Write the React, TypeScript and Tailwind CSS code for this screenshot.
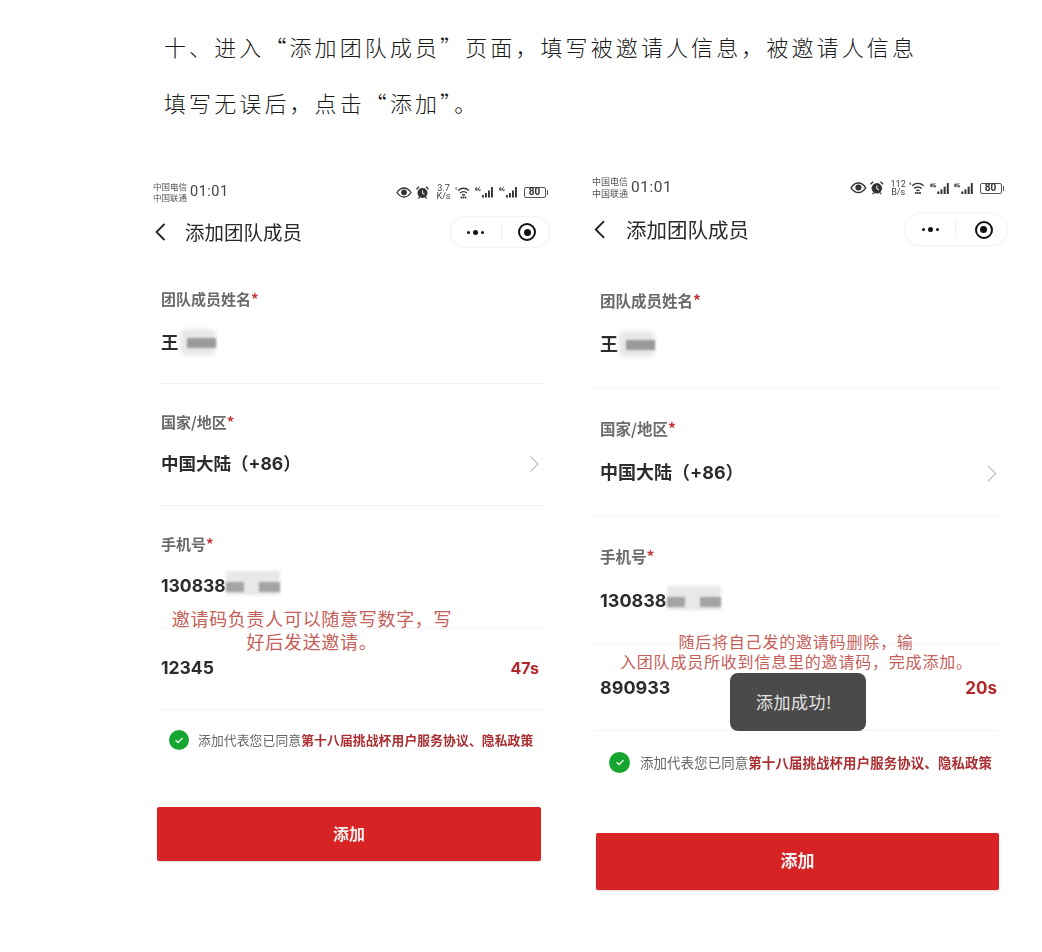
import React from "react";

type Cfg = {
  root: string; carrier: string; time: string; statusPad: string; statusGap: string; title: string; titleGap: string; back: number;
  nav: string; capsule: string; dotsBox: string; line: string; targetBox: string; label: string; value: string; star: string;
  rowPx: string; rowLine: string; f1: string; f2: string; f3: string; f4: string; v1: string; v2: string; v3: string; v4: string;
  arrow: number; arrowCls: string; suffix: string; agree: string; agreeIcon: number; agreeText: string; btn: string; btnText: string; scale: number;
  speedTop: string; speedBottom: string;
};

const left: Cfg = {
  root: "w-[397px]", carrier: "w-[37px] text-[8.500px] leading-[11px]", time: "text-[14.5px]", statusPad: "pr-[2px]", statusGap: "gap-[4px]",
  title: "text-[19.500px]", titleGap: "ml-[12px]", back: 22,
  nav: "mt-[13px] h-[32px]", capsule: "w-[100px] h-[32px]", dotsBox: "w-[51px]", line: "h-[16px]", targetBox: "w-[48px] pl-[4px]",
  label: "text-[15px]", value: "text-[17.500px]", star: "text-[#c33a3e]",
  rowPx: "ml-[7px] mr-[6px] pl-[1px]", rowLine: "border-[#f4f4f4]",
  f1: "mt-[14px] h-[122px] pt-[27px]", f2: "h-[122px] pt-[28px]", f3: "h-[123px] pt-[28px]", f4: "h-[81px] pt-[27px]",
  v1: "mt-[22px]", v2: "mt-[20px]", v3: "mt-[20px]", v4: "",
  arrow: 18, arrowCls: "mr-[1px]", suffix: "text-[16px] mr-[5px]", agree: "mt-[17px] ml-[16px] h-[26px] gap-[9px]", agreeIcon: 20, agreeText: "text-[12.750px] tracking-[0.15px]",
  btn: "mt-[54px] ml-[4px] w-[384px] h-[54px] pb-[3px]", btnText: "text-[16px]", scale: 1,
  speedTop: "3.7", speedBottom: "K/s",
};

const right: Cfg = {
  root: "w-[416px] -mt-[4px]", carrier: "w-[39px] text-[9px] leading-[12px]", time: "text-[15.5px]", statusPad: "pr-[4px]", statusGap: "gap-[3.500px]",
  title: "text-[20.500px]", titleGap: "ml-[13px]", back: 23,
  nav: "mt-[14px] h-[33px]", capsule: "w-[104px] h-[33px]", dotsBox: "w-[52px]", line: "h-[17px]", targetBox: "w-[52px] pl-[4px]",
  label: "text-[15.500px]", value: "text-[18px]", star: "text-[#c33a3e]",
  rowPx: "ml-[3px] mr-[11px] pl-[5px]", rowLine: "border-[#f4f4f4]",
  f1: "mt-[17px] h-[126px] pt-[27px]", f2: "h-[128px] pt-[29px]", f3: "h-[128px] pt-[29px]", f4: "h-[86px] pt-[31px]",
  v1: "mt-[23px]", v2: "mt-[23px]", v3: "mt-[23px]", v4: "",
  arrow: 19, arrowCls: "-mr-[4px]", suffix: "text-[17px] mr-[0px]", agree: "mt-[18px] ml-[17px] h-[26px] gap-[10px]", agreeIcon: 21, agreeText: "text-[13.400px] tracking-[0.15px]",
  btn: "mt-[58px] ml-[4px] w-[403px] h-[57px] pb-[3px]", btnText: "text-[17px]", scale: 1.05,
  speedTop: "112", speedBottom: "B/s",
};

function Eye({ s }: { s: number }) {
  return (
    <svg width={16 * s} height={11 * s} viewBox="0 0 16 11" className="shrink-0">
      <path d="M1 5.5C3 2.5 5.3 1 8 1s5 1.500 7 4.500C13 8.500 10.700 10 8 10S3 8.500 1 5.500Z" fill="none" stroke="#333" strokeWidth="1.3" />
      <circle cx="8" cy="5.300" r="2.900" fill="#333" />
    </svg>
  );
}

function Alarm({ s }: { s: number }) {
  return (
    <svg width={13 * s} height={13 * s} viewBox="0 0 13 13" className="shrink-0">
      <circle cx="6.500" cy="7" r="5" fill="#333" />
      <path d="M6.500 4.200V7l2 1.500" stroke="#ddd" strokeWidth="1.100" fill="none" />
      <path d="M0.500 3.200 3 0.800M12.500 3.200 10 0.800M2.500 12.500l1-1.300M10.500 12.500l-1-1.300" stroke="#333" strokeWidth="1.300" />
    </svg>
  );
}

function Wifi({ s }: { s: number }) {
  return (
    <svg width={16 * s} height={13 * s} viewBox="0 0 16 13" className="shrink-0">
      <path d="M3 4.500C6.300 1.800 10.700 1.800 14 4.500M5 7C7.200 5.300 9.800 5.300 12 7M7 9.300c1-.7 2-.7 3 0" stroke="#333" strokeWidth="1.400" fill="none" />
      <circle cx="6.500" cy="11.500" r="1" fill="#333" />
      <circle cx="8.500" cy="11.500" r="1" fill="#333" />
      <circle cx="10.500" cy="11.500" r="1" fill="#333" />
      <path d="M1.500 1.200C.8 2 .8 3 1.500 3.800" stroke="#444" strokeWidth="1" fill="none" />
    </svg>
  );
}

function Signal({ s }: { s: number }) {
  return (
    <svg width={20 * s} height={12 * s} viewBox="0 0 20 12" className="shrink-0">
      <path d="M1 1.500 0.500 4H2M2 1.500V5M5 1.500C3.800 1.500 3.500 2.300 3.500 3.200S4 4.800 5 4.800V3.200" stroke="#444" strokeWidth="1" fill="none" />
      <rect x="7" y="9" width="1.900" height="2.500" fill="#333" />
      <rect x="10" y="7" width="1.900" height="4.500" fill="#333" />
      <rect x="13" y="4.500" width="1.900" height="7" fill="#333" />
      <rect x="16" y="1" width="1.900" height="10.500" fill="#333" />
    </svg>
  );
}

function Capsule({ c }: { c: Cfg }) {
  return (
    <div className={`flex items-center rounded-full bg-white border border-[#f5f5f5] shadow-[0_0_3px_rgba(0,0,0,0.05)] ${c.capsule}`}>
      <div className={`flex items-center justify-center gap-[3px] ${c.dotsBox}`}>
        <span className="size-[3px] rounded-full bg-[#111]" />
        <span className="size-[5px] rounded-full bg-[#111]" />
        <span className="size-[3px] rounded-full bg-[#111]" />
      </div>
      <div className={`w-px bg-[#eeeeee] ${c.line}`} />
      <div className={`flex items-center justify-center ${c.targetBox}`}>
        <span className="flex items-center justify-center size-[18px] rounded-full border-2 border-[#111]">
          <span className="size-[7px] rounded-full bg-[#111]" />
        </span>
      </div>
    </div>
  );
}

function Mask({ variant }: { variant: "name" | "phone" | "phone2" }) {
  if (variant === "name") {
    return (
      <span className="relative inline-block w-[52px] h-[24px] ml-[1px]">
        <span className="absolute left-0 -top-[2px] w-[36px] h-[26px] rounded-md bg-[#e8e8e8] blur-[2px]" />
        <span className="absolute left-[7px] top-[7px] w-[29px] h-[10px] bg-[#9a9a9a] blur-[1px]" />
      </span>
    );
  }
  return (
    <span className="relative inline-block w-[62px] h-[24px]">
      <span className="absolute left-0 -top-[3px] w-[54px] h-[24px] bg-[#e8e8e8] blur-[1.500px]" />
      <span className="absolute left-0 top-[8px] w-[18px] h-[10px] bg-[#a3a3a3] blur-[1px]" />
      <span className="absolute left-[33px] top-[8px] w-[21px] h-[10px] bg-[#a3a3a3] blur-[1px]" />
    </span>
  );
}

function Label({ c, text }: { c: Cfg; text: string }) {
  return (
    <div className={`h-[20px] leading-[20px] font-semibold text-[#6b6b6b] ${c.label}`}>
      {text}<span className={c.star}>*</span>
    </div>
  );
}

function Phone({ c, name, code, suffix, mask }: { c: Cfg; name: React.ReactNode; code: string; suffix: string; mask: "phone" | "phone2" }) {
  const row = `border-b ${c.rowPx} ${c.rowLine}`;
  const val = `h-[24px] leading-[24px] font-bold text-[#2c2c2c] flex items-center font-['Inter','Noto_Sans_CJK_SC',sans-serif] ${c.value}`;
  return (
    <div className={`relative shrink-0 ${c.root}`}>
      <div className="blur-[0.4px]">
        <div className={`flex items-center justify-between h-[22px] ${c.statusPad}`}>
          <div className="flex items-center">
            <div className={`text-[#555] ${c.carrier}`}>
              <div>中国电信</div>
              <div>中国联通</div>
            </div>
            <span className={`font-['Roboto',sans-serif] text-[#444] tracking-[0.5px] ${c.time}`}>01:01</span>
          </div>
          <div className={`flex items-center ${c.statusGap}`}>
            <Eye s={c.scale} />
            <Alarm s={c.scale} />
            <div className="ml-[3px] text-center text-[9px] leading-[8px] text-[#444] font-['Roboto',sans-serif]">
              <div>{c.speedTop}</div>
              <div>{c.speedBottom}</div>
            </div>
            <Wifi s={c.scale} />
            <Signal s={c.scale} />
            <Signal s={c.scale} />
            <div className="flex items-center ml-[1px]">
              <span className="flex items-center justify-center w-[22px] h-[11px] rounded-[2px] border border-[#555] text-[10px] leading-none font-bold text-[#333] font-['Roboto',sans-serif]">80</span>
              <span className="w-[1.500px] h-[5px] bg-[#555] ml-[1px]" />
            </div>
          </div>
        </div>

        <div className={`flex items-center justify-between ${c.nav}`}>
          <div className="flex items-center">
            <svg width={c.back} height={c.back} viewBox="0 0 22 22" className="-ml-[2px] shrink-0">
              <path d="M13.500 3 5.500 11l8 8" fill="none" stroke="#222" strokeWidth="1.800" />
            </svg>
            <span className={`text-[#2a2a2a] ${c.title} ${c.titleGap}`}>添加团队成员</span>
          </div>
          <Capsule c={c} />
        </div>

        <div className={`${row} ${c.f1}`}>
          <Label c={c} text="团队成员姓名" />
          <div className={`${val} ${c.v1}`}>{name}</div>
        </div>
        <div className={`${row} ${c.f2}`}>
          <Label c={c} text="国家/地区" />
          <div className={`${val} justify-between ${c.v2}`}>
            <span>中国大陆（+86）</span>
            <svg width={c.arrow} height={c.arrow} viewBox="0 0 18 18" className={`shrink-0 ${c.arrowCls}`}>
              <path d="M5.500 1.500 13 9l-7.500 7.500" fill="none" stroke="#bdbdbd" strokeWidth="1.100" />
            </svg>
          </div>
        </div>
        <div className={`${row} ${c.f3}`}>
          <Label c={c} text="手机号" />
          <div className={`${val} ${c.v3}`}>130838<Mask variant={mask} /></div>
        </div>
        <div className={`${row} ${c.f4}`}>
          <div className={`${val} justify-between ${c.v4}`}>
            <span>{code}</span>
            <span className={`font-bold text-[#b3282c] ${c.suffix}`}>{suffix}</span>
          </div>
        </div>

        <div className={`flex items-center ${c.agree}`}>
          <span className="flex items-center justify-center rounded-full bg-[#16a52f] shrink-0" style={{ width: c.agreeIcon, height: c.agreeIcon }}>
            <svg width="12" height="12" viewBox="0 0 12 12">
              <path d="M2.500 6.200 5 8.500l4.500-4.500" fill="none" stroke="#e8f7ea" strokeWidth="1.300" />
            </svg>
          </span>
          <span className={`whitespace-nowrap text-[#666] ${c.agreeText}`}>
            添加代表您已同意<span className="font-bold text-[#a92f33]">第十八届挑战杯用户服务协议、隐私政策</span>
          </span>
        </div>

        <button className={`flex items-center justify-center rounded-[2px] bg-[#d72323] font-bold text-[#f6f0f0] shadow-[0_1px_2px_rgba(0,0,0,0.15)] ${c.btn} ${c.btnText}`}>添加</button>
      </div>
    </div>
  );
}

export default function App() {
  return (
    <div className="relative w-[1042px] h-[952px] overflow-hidden bg-white font-['Noto_Sans_CJK_SC','Noto_Sans',sans-serif]">
      <div className="pl-[164px] pt-[18px] text-[22px] leading-[56px] tracking-[3.100px] font-light text-[#1a1a1a]">
        <p className="whitespace-nowrap">十、进入“添加团队成员”页面，填写被邀请人信息，被邀请人信息</p>
        <p className="whitespace-nowrap">填写无误后，点击“添加”。</p>
      </div>

      <div className="flex pl-[153px] pt-[51px] gap-[42px]">
        <div className="relative">
          <Phone c={left} name={<>王<Mask variant="name" /></>} code="12345" suffix="47s" mask="phone" />
          <div className="absolute left-[14px] top-[426px] w-[290px] text-center text-[18px] leading-[23px] tracking-[0.7px] text-[#c4605a]">
            <div className="whitespace-nowrap">邀请码负责人可以随意写数字，写</div>
            <div className="whitespace-nowrap">好后发送邀请。</div>
          </div>
        </div>
        <div className="relative">
          <Phone c={right} name={<>王<Mask variant="name" /></>} code="890933" suffix="20s" mask="phone2" />
          <div className="absolute left-[28px] top-[450px] w-[346px] text-center text-[16px] leading-[20px] tracking-[0.8px] text-[#c4605a]">
            <div className="whitespace-nowrap pl-[6px]">随后将自己发的邀请码删除，输</div>
            <div className="whitespace-nowrap">入团队成员所收到信息里的邀请码，完成添加。</div>
          </div>
          <div className="absolute left-[138px] top-[492px] flex items-center justify-center w-[136px] h-[58px] pr-[8px] rounded-[8px] bg-[#4a4a4a] text-[17px] tracking-[0.5px] text-[#e4e4e4]">添加成功!</div>
        </div>
      </div>
    </div>
  );
}
